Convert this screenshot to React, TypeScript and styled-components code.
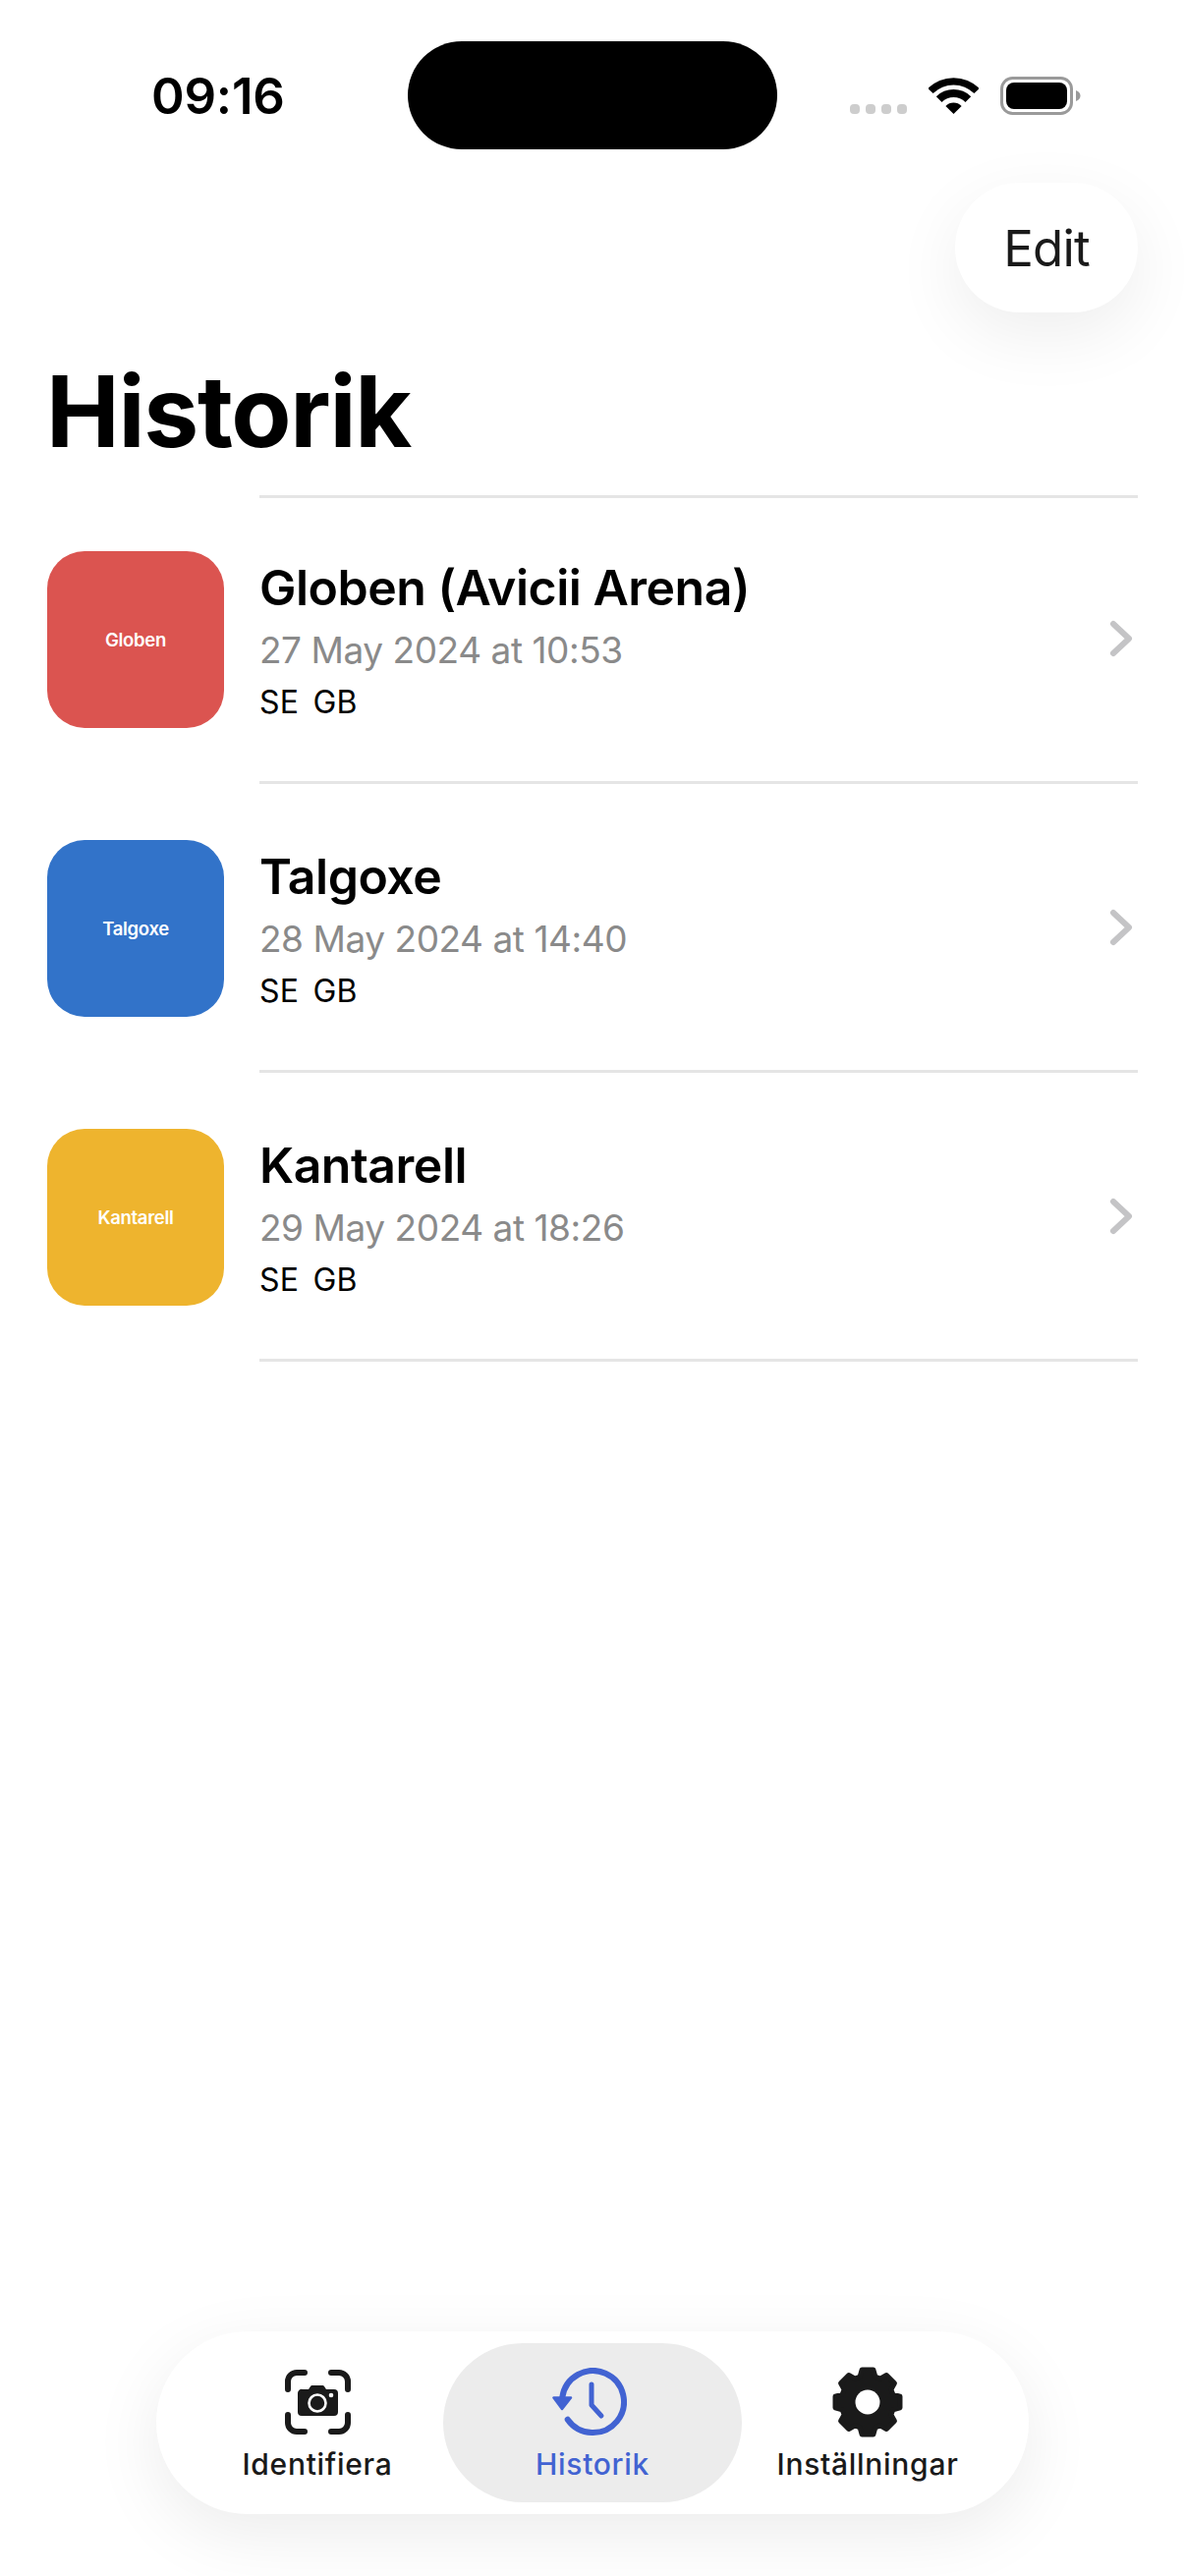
import React from "react";
import styled, { createGlobalStyle } from "styled-components";

const Global = createGlobalStyle`
  html, body { margin: 0; padding: 0; background: #fff; }
  body { font-family: Inter, "Liberation Sans", sans-serif; color: #000; }
  * { box-sizing: border-box; }
`;

const Page = styled.div`
  width: 1206px;
  height: 2622px;
  display: flex;
  flex-direction: column;
  background: #fff;
  overflow: hidden;
`;

const StatusBar = styled.div`
  display: flex;
  align-items: center;
  height: 110px;
  margin-top: 42px;
  padding-left: 154px;
`;

const Time = styled.div`
  width: 261px;
  font-size: 51px;
  font-weight: 600;
  line-height: 113px;
  letter-spacing: -0.2px;
`;

const Island = styled.div`
  width: 376px;
  height: 110px;
  border-radius: 55px;
  background: #000;
`;

const StatusIcons = styled.div`
  display: flex;
  align-items: center;
  height: 39px;
  margin-left: 74px;
`;

const Dots = styled.div`
  display: flex;
  gap: 6px;
  align-self: flex-end;
  margin-bottom: 1px;
  margin-right: 22px;
`;

const Dot = styled.span`
  width: 10px;
  height: 10px;
  border-radius: 4px;
  background: #cdcdcd;
`;

const WifiSvg = styled.svg`
  width: 51px;
  height: 37px;
  margin-right: 22px;
`;

const BatterySvg = styled.svg`
  width: 83px;
  height: 39px;
`;

const EditRow = styled.div`
  display: flex;
  justify-content: flex-end;
  margin-top: 34px;
  padding: 0 48px;
`;

const EditButton = styled.div`
  width: 186px;
  height: 132px;
  border-radius: 66px;
  display: flex;
  align-items: center;
  justify-content: center;
  background: #fff;
  font-size: 51px;
  font-weight: 400;
  letter-spacing: -0.8px;
  color: #1a1a1a;
  box-shadow: 0 22px 70px rgba(0, 0, 0, 0.07);
`;

const Title = styled.h1`
  margin: 41px 0 0;
  padding-left: 47px;
  font-size: 100px;
  font-weight: 700;
  line-height: 120px;
  letter-spacing: -1.3px;
`;

const List = styled.div`
  margin-top: 25px;
`;

const TopRule = styled.div`
  height: 3px;
  margin: 0 48px -3px 264px;
  background: #e5e5e5;
`;

const Row = styled.div`
  display: flex;
  align-items: center;
  gap: 36px;
  padding: 0 48px;
`;

const Thumb = styled.div<{ $color: string }>`
  flex: none;
  width: 180px;
  height: 180px;
  border-radius: 38px;
  display: flex;
  align-items: center;
  justify-content: center;
  background: ${(p) => p.$color};
  color: #fff;
  font-size: 18.5px;
  font-weight: 600;
  letter-spacing: -0.3px;
`;

const RowBody = styled.div`
  flex: 1;
  height: 294px;
  display: flex;
  align-items: center;
  justify-content: space-between;
  padding-right: 5px;
  border-bottom: 3px solid #e5e5e5;
`;

const RowText = styled.div`
  display: flex;
  flex-direction: column;
  margin-top: 3px;
`;

const RowTitle = styled.div`
  font-size: 50px;
  font-weight: 600;
  line-height: 60px;
  letter-spacing: -0.5px;
`;

const RowDate = styled.div`
  margin-top: 11px;
  font-size: 37px;
  font-weight: 400;
  line-height: 45px;
  letter-spacing: -0.45px;
  color: #8a8a8a;
`;

const RowLangs = styled.div`
  display: flex;
  gap: 14px;
  margin-top: 11px;
  font-size: 32px;
  font-weight: 400;
  line-height: 40px;
  letter-spacing: 0.3px;
`;

const Chevron = styled.svg`
  width: 24px;
  height: 38px;
`;

const TabBar = styled.div`
  margin: auto auto 63px;
  width: 888px;
  height: 186px;
  padding: 12px 24px;
  display: grid;
  grid-template-columns: repeat(3, 280px);
  border-radius: 93px;
  background: #fff;
  box-shadow: 0 20px 70px rgba(0, 0, 0, 0.08);
`;

const Tab = styled.div<{ $active?: boolean }>`
  display: flex;
  flex-direction: column;
  align-items: center;
  padding-top: 24px;
  margin: 0 ${(p) => (p.$active ? "-12px" : "0")};
  border-radius: 81px;
  background: ${(p) => (p.$active ? "#ececec" : "transparent")};
  color: ${(p) => (p.$active ? "#4263d2" : "#1a1a1a")};
`;

const TabIcon = styled.div<{ $shift?: number }>`
  height: 72px;
  display: flex;
  align-items: center;
  justify-content: center;
  margin-right: ${(p) => p.$shift ?? 0}px;
`;

const TabLabel = styled.div`
  margin-top: 9px;
  font-size: 30px;
  font-weight: 500;
  line-height: 37px;
  letter-spacing: 0.7px;
  white-space: nowrap;
`;

const gearPoints = () => {
  const pts: string[] = [];
  for (let i = 0; i < 8; i++) {
    const a = (i * 45 - 90) * (Math.PI / 180);
    const add = (r: number, d: number) => {
      const t = a + d * (Math.PI / 180);
      pts.push(`${(36 + r * Math.cos(t)).toFixed(2)},${(36 + r * Math.sin(t)).toFixed(2)}`);
    };
    add(27, -17);
    add(33.5, -10);
    add(33.5, 10);
    add(27, 17);
  }
  return pts.join(" ");
};

const CameraIcon = () => (
  <svg width="67" height="66" viewBox="0 0 67 66">
    <path
      d="M3 20V12a9 9 0 0 1 9-9h8M47 3h8a9 9 0 0 1 9 9v8M64 46v8a9 9 0 0 1-9 9h-8M20 63h-8a9 9 0 0 1-9-9v-8"
      fill="none"
      stroke="currentColor"
      strokeWidth="6"
      strokeLinecap="round"
    />
    <path
      d="M18 20h6l2-3a2 2 0 0 1 2-1h10a2 2 0 0 1 2 1l2 3h8a4 4 0 0 1 4 4v19a4 4 0 0 1-4 4H17a4 4 0 0 1-4-4V24a4 4 0 0 1 5-4z"
      fill="currentColor"
    />
    <circle cx="33" cy="34" r="8.5" fill="none" stroke="#fff" strokeWidth="2.6" />
    <circle cx="47" cy="26" r="2.3" fill="#fff" />
  </svg>
);

const ClockIcon = () => (
  <svg width="76" height="70" viewBox="0 0 76 70">
    <path
      d="M10.3 30A31.5 31.5 0 1 1 15.7 52.7"
      fill="none"
      stroke="currentColor"
      strokeWidth="6"
      strokeLinecap="round"
    />
    <path d="M1.5 30.5H19L10 42z" fill="currentColor" stroke="currentColor" strokeWidth="2.5" strokeLinejoin="round" />
    <path d="M40 17V38L50 49" fill="none" stroke="currentColor" strokeWidth="5" strokeLinecap="round" strokeLinejoin="round" />
  </svg>
);

const GearIcon = () => (
  <svg width="72" height="72" viewBox="0 0 72 72">
    <polygon points={gearPoints()} fill="currentColor" stroke="currentColor" strokeWidth="5" strokeLinejoin="round" />
    <circle cx="36" cy="36" r="12.5" fill="#fff" />
  </svg>
);

const items = [
  { title: "Globen (Avicii Arena)", thumb: "Globen", date: "27 May 2024 at 10:53", color: "#db5450" },
  { title: "Talgoxe", thumb: "Talgoxe", date: "28 May 2024 at 14:40", color: "#3273c9" },
  { title: "Kantarell", thumb: "Kantarell", date: "29 May 2024 at 18:26", color: "#eeb42e" },
];

export default function App() {
  return (
    <Page>
      <Global />
      <StatusBar>
        <Time>09:16</Time>
        <Island />
        <StatusIcons>
          <Dots>
            <Dot />
            <Dot />
            <Dot />
            <Dot />
          </Dots>
          <WifiSvg viewBox="0 0 51 37">
            <path d="M-.7 11A37 37 0 0 1 51.7 11L46.4 16.1A29.5 29.5 0 0 0 4.6 16.1Z" fill="#000" />
            <path d="M7.8 19.3A25 25 0 0 1 43.2 19.3L37.5 25A17 17 0 0 0 13.5 25Z" fill="#000" />
            <path d="M17.4 28.9A11.5 11.5 0 0 1 33.6 28.9L25.5 37Z" fill="#000" />
          </WifiSvg>
          <BatterySvg viewBox="0 0 83 39">
            <rect x="1.5" y="1.5" width="71" height="36" rx="11" fill="none" stroke="#9a9a9a" strokeWidth="3" />
            <rect x="6" y="6" width="62" height="27" rx="8" fill="#000" />
            <path d="M77 14c3 1 4.500 3 4.500 5.500S80 24 77 25z" fill="#9a9a9a" />
          </BatterySvg>
        </StatusIcons>
      </StatusBar>
      <EditRow>
        <EditButton>Edit</EditButton>
      </EditRow>
      <Title>Historik</Title>
      <List>
        <TopRule />
        {items.map((it) => (
          <Row key={it.title}>
            <Thumb $color={it.color}>{it.thumb}</Thumb>
            <RowBody>
              <RowText>
                <RowTitle>{it.title}</RowTitle>
                <RowDate>{it.date}</RowDate>
                <RowLangs>
                  <span>SE</span>
                  <span>GB</span>
                </RowLangs>
              </RowText>
              <Chevron viewBox="0 0 24 38">
                <path d="M4 4L20 19L4 34" fill="none" stroke="#c4c4c6" strokeWidth="6" strokeLinecap="round" strokeLinejoin="round" />
              </Chevron>
            </RowBody>
          </Row>
        ))}
      </List>
      <TabBar>
        <Tab>
          <TabIcon>
            <CameraIcon />
          </TabIcon>
          <TabLabel>Identifiera</TabLabel>
        </Tab>
        <Tab $active>
          <TabIcon $shift={6}>
            <ClockIcon />
          </TabIcon>
          <TabLabel>Historik</TabLabel>
        </Tab>
        <Tab>
          <TabIcon>
            <GearIcon />
          </TabIcon>
          <TabLabel>Inställningar</TabLabel>
        </Tab>
      </TabBar>
    </Page>
  );
}
